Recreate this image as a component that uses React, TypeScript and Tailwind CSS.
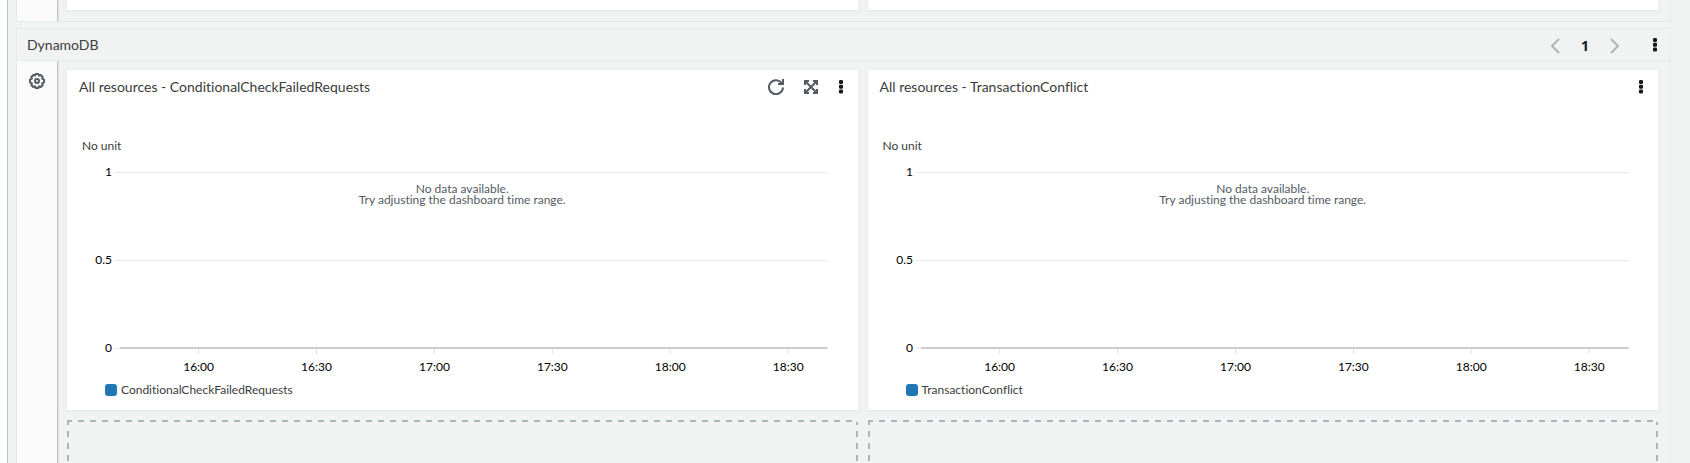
import React from "react";

const TIMES = ["16:00", "16:30", "17:00", "17:30", "18:00", "18:30"];
const Y_TICKS = [
  { label: "1", y: 8 },
  { label: "0.5", y: 96 },
  { label: "0", y: 184 },
];

// The time axis runs from 15:40 to 18:40, so the first tick is 20 minutes in.
const tickX = (i: number) => `${((20 + i * 30) / 180) * 100}%`;

function DotsIcon() {
  return (
    <svg width="4" height="14" viewBox="0 0 4 14" fill="currentColor" aria-hidden="true">
      <rect x="0" y="0" width="4" height="4" rx="1.2" />
      <rect x="0" y="4.7" width="4" height="4" rx="1.2" />
      <rect x="0" y="9.4" width="4" height="4" rx="1.2" />
    </svg>
  );
}

function RefreshIcon() {
  return (
    <svg width="16" height="16" viewBox="0 0 16 16" fill="none" stroke="currentColor" strokeWidth="2" aria-hidden="true">
      <path d="M15 8.5A7 7 0 1 1 13.4 3.7L14.6 5" />
      <path d="M15 0v5H10" />
    </svg>
  );
}

function ExpandIcon() {
  return (
    <svg width="14" height="14" viewBox="0 0 14 14" fill="none" stroke="currentColor" strokeWidth="2" aria-hidden="true">
      <path d="M1 5V1H5M9 1H13V5M13 9V13H9M5 13H1V9" />
      <path d="M1.5 1.5L12.5 12.5M12.5 1.5L1.5 12.5" />
      <path d="M0 0h5L0 5zM14 0v5L9 0zM14 14H9l5-5zM0 14V9l5 5z" fill="currentColor" stroke="none" />
    </svg>
  );
}

function GearIcon() {
  return (
    <svg width="16" height="16" viewBox="0 0 16 16" fill="none" stroke="currentColor" strokeWidth="2" strokeLinejoin="round" aria-hidden="true">
      <path d="M6.6 1h2.8l.6 1.6 1.7-.6 2 2-.6 1.7 1.9.9v2.8l-1.9.9.6 1.7-2 2-1.7-.6-.7 1.6H6.6L6 13.4l-1.7.6-2-2 .6-1.7L1 9.400V6.600l1.900-.9L2.300 4l2-2 1.700.6z" />
      <circle cx="8" cy="8" r="2" />
    </svg>
  );
}

function Chevron({ flip = false }: { flip?: boolean }) {
  return (
    <svg width="9" height="16" viewBox="0 0 9 16" fill="none" stroke="currentColor" strokeWidth="2" aria-hidden="true">
      <path d={flip ? "M1 1l7 7-7 7" : "M8 1L1 8l7 7"} />
    </svg>
  );
}

function Sidebar({ children }: { children?: React.ReactNode }) {
  return (
    <aside className="flex w-[41px] shrink-0 justify-center border-r border-[#bcc5c5] bg-[#fafafa] pt-3 text-[#545b64] shadow-[1px_0_1px_#dfe3e3]">
      {children}
    </aside>
  );
}

function DropSlot() {
  return (
    <div className="flex flex-col">
      <div className="h-[2px] shrink-0 bg-[linear-gradient(90deg,#aab7b8_50%,transparent_50%)] bg-[length:12px_2px] bg-[position:-1px_0]" />
      <div className="flex flex-1 justify-between">
        <div className="w-[2px] bg-[linear-gradient(180deg,#aab7b8_50%,transparent_50%)] bg-[length:2px_12px] bg-[position:0_-3px]" />
        <div className="w-[2px] bg-[linear-gradient(180deg,#aab7b8_50%,transparent_50%)] bg-[length:2px_12px] bg-[position:0_-3px]" />
      </div>
    </div>
  );
}

function Widget({ metric, active = false }: { metric: string; active?: boolean }) {
  return (
    <article className="relative h-[340px] bg-white shadow-[0_1px_3px_1px_#e9ebeb]">
      <header className="flex h-[34px] items-center pr-[15px] pl-3">
        <h3 className="flex-1 text-[14px] leading-5 text-[#3c3c3c]">All resources - {metric}</h3>
        {active && (
          <div className="mr-[21px] flex items-center gap-5 text-[#545b64]">
            <button type="button" aria-label="Refresh">
              <RefreshIcon />
            </button>
            <button type="button" aria-label="Enlarge">
              <ExpandIcon />
            </button>
          </div>
        )}
        <button type="button" aria-label="Widget actions" className="text-[#16191f]">
          <DotsIcon />
        </button>
      </header>
      <p className="pt-[34px] pl-[15px] text-[12px] leading-4 text-[#3c3c3c]">No unit</p>
      <div className="mt-[10px] mr-[30px] ml-[53px]">
        <svg className="block h-[212px] w-full overflow-visible text-[12px]" role="img" aria-label={`${metric} chart`}>
          {Y_TICKS.map(({ label, y }) => (
            <g key={label}>
              <rect x="-5" y={y} width="5" height="1" fill="#e9ebeb" />
              <rect x="0" y={y} width="100%" height="1" fill="#e9ebeb" />
              <text x="-8" y={y + 4} textAnchor="end" fill="#000">
                {label}
              </text>
            </g>
          ))}
          {TIMES.map((time, i) => (
            <g key={time}>
              <line x1={tickX(i)} x2={tickX(i)} y1="185" y2="190" stroke="#e0e3e3" />
              <text x={tickX(i)} y="207" textAnchor="middle" fill="#000">
                {time}
              </text>
            </g>
          ))}
          <rect x="0" y="183" width="100%" height="2" fill="#ccc" />
        </svg>
      </div>
      <div className="mt-[5px] ml-[38px] flex items-center gap-1">
        <span className="size-3 rounded-[3px] bg-[#1f77b4]" />
        <span className="text-[12px] leading-[18px] text-[#3c3c3c]">{metric}</span>
      </div>
      <p className="absolute inset-x-0 top-[113px] text-center text-[12px] leading-[11px] text-[#545b64]">
        No data available.
        <br />
        Try adjusting the dashboard time range.
      </p>
    </article>
  );
}

export default function App() {
  return (
    <div className="flex h-screen overflow-hidden bg-white pl-[7px] font-['Lato','Noto_Sans',sans-serif] [font-variant-ligatures:none]">
      <main className="flex min-w-0 flex-1 flex-col border-l border-[#bcc5c5] bg-[#f1f3f3] pr-[19px] pl-2">
        <section className="flex h-[22px] shrink-0 border border-t-0 border-[#e7eaea]">
          <Sidebar />
          <div className="grid flex-1 grid-cols-2 gap-[10px] pr-3 pb-[11px] pl-[9px]">
            <div className="bg-white shadow-[0_1px_3px_1px_#e9ebeb]" />
            <div className="bg-white shadow-[0_1px_3px_1px_#e9ebeb]" />
          </div>
        </section>

        <section className="mt-[6px] flex min-h-0 flex-1 flex-col border border-b-0 border-[#e7eaea]">
          <header className="flex h-8 shrink-0 items-center border-b border-[#e7eaea] pr-[13px] pl-[10px]">
            <h2 className="flex-1 text-[14px] leading-5 text-[#3c3c3c]">DynamoDB</h2>
            <nav aria-label="Pages" className="mr-[34px] flex items-center pt-[3px] text-[#aab7b8]">
              <button type="button" aria-label="Previous page">
                <Chevron />
              </button>
              <button
                type="button"
                aria-current="page"
                className="w-[50px] text-center font-['Noto_Sans',sans-serif] text-[14px] leading-4 font-bold text-[#16191f]"
              >
                1
              </button>
              <button type="button" aria-label="Next page">
                <Chevron flip />
              </button>
            </nav>
            <button type="button" aria-label="Group actions" className="text-[#16191f]">
              <DotsIcon />
            </button>
          </header>
          <div className="flex min-h-0 flex-1">
            <Sidebar>
              <button type="button" aria-label="Settings" className="self-start">
                <GearIcon />
              </button>
            </Sidebar>
            <div className="grid flex-1 grid-cols-2 grid-rows-[auto_1fr] gap-[10px] pt-[9px] pr-3 pl-[9px]">
              <Widget metric="ConditionalCheckFailedRequests" active />
              <Widget metric="TransactionConflict" />
              <DropSlot />
              <DropSlot />
            </div>
          </div>
        </section>
      </main>
    </div>
  );
}
